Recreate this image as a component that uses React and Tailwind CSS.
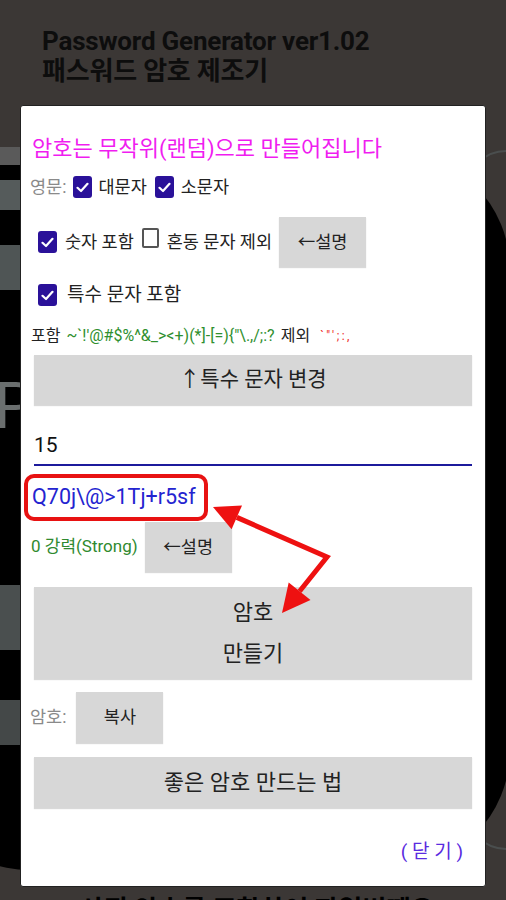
import React from "react";

const Check = () => (
  <span className="inline-flex items-center justify-center w-[19px] h-[22px] rounded-[3px] bg-[#2a1199]">
    <svg width="13" height="11" viewBox="0 0 13 11">
      <path d="M1.5 5.8 L5 9 L11.5 1.8" fill="none" stroke="white" strokeWidth="2.2" strokeLinecap="round" strokeLinejoin="round" />
    </svg>
  </span>
);

const Empty = () => <span className="inline-block w-[17px] h-[20px] rounded-[2px] border-2 border-[#555]" />;

const GrayBtn = ({ className = "", children }) => (
  <button className={"bg-[#d7d7d7] text-[#222] shadow-[0_1px_1px_rgba(0,0,0,0.15)] " + className}>{children}</button>
);

export default function App() {
  return (
    <div className="relative h-[900px] w-[506px] overflow-hidden bg-[#3b3735] font-[Roboto,'Noto_Sans_CJK_KR',sans-serif]">
      {/* blurred app screenshot behind the dialog */}
      <div className="absolute left-[-90px] top-[150px] w-[600px] h-[720px] rounded-[120px] bg-black" />
      <div className="absolute right-[-40px] top-[150px] w-[80px] h-[700px] rounded-[60px] border-2 border-[#4a4e4e]" />
      <div className="absolute left-0 top-[147px] w-[24px] h-[18px] bg-[#5a5a5a]" />
      <div className="absolute left-0 top-[180px] w-[24px] h-[30px] bg-[#555b5b]" />
      <div className="absolute left-0 top-[245px] w-[24px] h-[45px] bg-[#4f5555]" />
      <div className="absolute left-[-6px] top-[372px] text-[64px] leading-[70px] text-[#6a6e6e]">P</div>
      <div className="absolute left-0 top-[585px] w-[24px] h-[65px] bg-[#4a4f4f]" />
      <div className="absolute left-0 top-[700px] w-[24px] h-[45px] bg-[#444848]" />

      <div className="relative pl-[42px] pt-[26px] text-[#0d0d0d] font-bold text-[26px] leading-[30px] tracking-[-0.2px]">
        <div>Password Generator ver1.02</div>
        <div>패스워드 암호 제조기</div>
      </div>

      <div className="relative mx-[20px] mt-[19px] h-[782px] rounded-[3px] border border-[#222] bg-white flex flex-col">
        <div className="mt-[29px] pl-[11px] text-[22px] leading-[28px] text-[#f01df0]">암호는 무작위(랜덤)으로 만들어집니다</div>

        <div className="mt-[12px] pl-[9px] h-[24px] flex items-center text-[17.5px] text-[#222]">
          <span className="text-[#8a8a8a]">영문:</span>
          <span className="ml-[7px]"><Check /></span>
          <span className="ml-[6px]">대문자</span>
          <span className="ml-[8px]"><Check /></span>
          <span className="ml-[7px]">소문자</span>
        </div>

        <div className="mt-[18px] pl-[17px] h-[50px] flex items-center text-[17.5px] text-[#222]">
          <Check />
          <span className="ml-[8px]">숫자 포함</span>
          <span className="ml-[8px]"><Empty /></span>
          <span className="ml-[8px]">혼동 문자 제외</span>
          <GrayBtn className="ml-[7px] w-[87px] h-[50px] text-[17.5px]">←설명</GrayBtn>
        </div>

        <div className="mt-[14px] pl-[17px] h-[28px] flex items-center text-[19px] text-[#222]">
          <Check />
          <span className="ml-[10px]">특수 문자 포함</span>
        </div>

        <div className="mt-[17px] pl-[10px] h-[20px] flex items-center text-[16px] whitespace-nowrap">
          <span className="text-[#222]">포함</span>
          <span className="ml-[6px] text-[#2f8f2f]">{'~`!\'@#$%^&_><+)(*]-[=){"\\.,/;:?'}</span>
          <span className="ml-[6px] text-[#222]">제외</span>
          <span className="ml-[10px] text-[#ee2222] text-[12px] tracking-[2.5px]">{'`"\';:,'}</span>
        </div>

        <GrayBtn className="mt-[9px] mx-[13px] h-[50px] text-[21px]">↑특수 문자 변경</GrayBtn>

        <div className="mt-[14px] mx-[13px] h-[47px] border-b-2 border-[#1c1a9c] pt-[14px] text-[21px] leading-[24px] text-[#111]">15</div>

        <div className="mt-[8px] ml-[3px] w-[184px] h-[47px] rounded-[10px] border-[4px] border-[#e81212] flex items-center pl-[4px] text-[21.5px] text-[#2424d0] whitespace-nowrap">
          Q70j\@&gt;1Tj+r5sf
        </div>

        <div className="mt-[1px] pl-[10px] h-[50px] flex items-center text-[17px]">
          <span className="text-[#2f8a2f]">0 강력(Strong)</span>
          <GrayBtn className="ml-[7px] w-[87px] h-[50px] text-[17.5px]">←설명</GrayBtn>
        </div>

        <GrayBtn className="mt-[15px] mx-[13px] h-[92px] text-[22px] leading-[41px] flex flex-col items-center justify-center">
          <span>암호</span>
          <span>만들기</span>
        </GrayBtn>

        <div className="mt-[13px] pl-[9px] h-[51px] flex items-center text-[17.5px]">
          <span className="text-[#8a8a8a]">암호:</span>
          <GrayBtn className="ml-[10px] w-[87px] h-[51px] text-[17.5px]">복사</GrayBtn>
        </div>

        <GrayBtn className="mt-[14px] mx-[13px] h-[51px] text-[22px]">좋은 암호 만드는 법</GrayBtn>

        <div className="mt-[32px] pr-[22px] h-[24px] flex items-center justify-end text-[19px] text-[#5a2be0]">( 닫 기 )</div>
      </div>

      <div className="relative mt-[8px] pl-[80px] text-[26px] leading-[30px] font-bold text-black whitespace-nowrap">사진 암호를 조합하여 파일번째요</div>

      {/* red arrows drawn over the screenshot */}
      <svg className="absolute inset-0 pointer-events-none" width="506" height="900">
        <polyline points="236.8,517.4 327,557 299.6,591.2" fill="none" stroke="#ee1111" strokeWidth="5" strokeLinejoin="miter" />
        <polygon points="213,507 242,505.5 231.6,529.3" fill="#ee1111" />
        <polygon points="282,613 310.5,600 288.7,582.4" fill="#ee1111" />
      </svg>
    </div>
  );
}
